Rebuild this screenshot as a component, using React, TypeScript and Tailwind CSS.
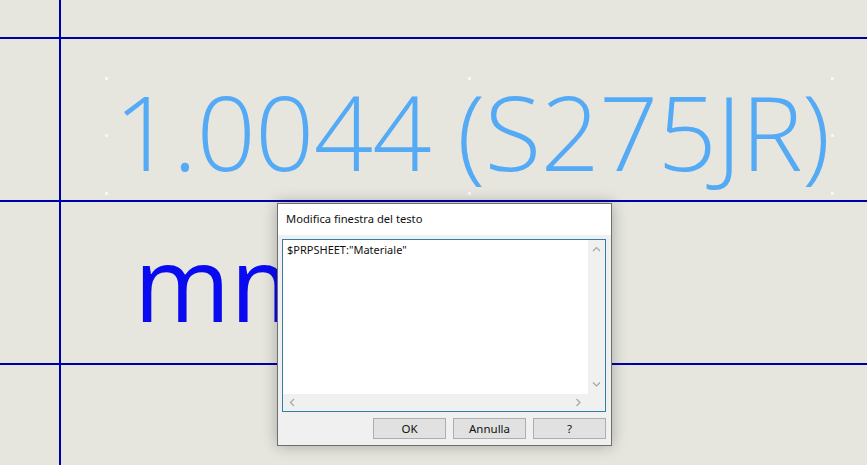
import React from "react";

const Chevron = ({ dir }: { dir: "up" | "down" | "left" | "right" }) => {
  const paths: Record<string, string> = {
    up: "M1 5 L4.5 1.5 L8 5",
    down: "M1 1.5 L4.5 5 L8 1.5",
    left: "M5 1 L1.5 4.5 L5 8",
    right: "M1.5 1 L5 4.5 L1.5 8",
  };
  const vertical = dir === "up" || dir === "down";
  return (
    <svg
      width={vertical ? 9 : 7}
      height={vertical ? 7 : 9}
      viewBox={vertical ? "0 0 9 7" : "0 0 7 9"}
      fill="none"
      stroke="#a6a6a6"
      strokeWidth="1.2"
    >
      <path d={paths[dir]} />
    </svg>
  );
};

const Handle = ({ className }: { className: string }) => (
  <span className={`absolute w-[3px] h-[3px] bg-[#f6f6f2] ${className}`} />
);

const DialogButton = ({ label }: { label: string }) => (
  <button className="w-[73px] h-[21px] bg-[#e1e1e1] border border-[#adadad] text-[11.5px] text-[#111] flex items-center justify-center leading-none">
    {label}
  </button>
);

export default function App() {
  return (
    <div
      className="relative w-[867px] h-[465px] overflow-hidden bg-[#0000aa]"
      style={{ fontFamily: "'Noto Sans', 'Liberation Sans', sans-serif" }}
    >
      {/* sheet table: the 2px gaps show the blue ruling */}
      <div className="grid grid-cols-[59px_1fr] grid-rows-[37px_161px_161px_100px] gap-[2px] w-full h-full">
        <div className="bg-[#e6e6df]" />
        <div className="bg-[#e6e6df]" />

        <div className="bg-[#e6e6df]" />
        <div className="bg-[#e6e6df] pt-[38px] pl-[44px]">
          <div className="relative w-[729px] h-[118px]">
            <Handle className="left-0 top-0" />
            <Handle className="left-0 top-[57px]" />
            <Handle className="left-0 bottom-0" />
            <Handle className="left-[363px] top-0" />
            <Handle className="left-[363px] bottom-0" />
            <Handle className="right-0 top-0" />
            <Handle className="right-0 top-[57px]" />
            <Handle className="right-0 bottom-0" />
            <div
              className="pl-[9px] pt-[2px] text-[104px] leading-none text-[#55aaf5] font-[350] whitespace-nowrap tracking-[-0.8px]"
              style={{ fontFamily: "'Open Sans', sans-serif" }}
            >
              1.0044 (S275JR)
            </div>
          </div>
        </div>

        <div className="bg-[#e6e6df]" />
        <div className="bg-[#e6e6df] pl-[73px] pt-[28px]">
          <div
            className="text-[104px] leading-none text-[#0a0af0] whitespace-nowrap"
            style={{ fontFamily: "'Open Sans', sans-serif" }}
          >
            mm
          </div>
        </div>

        <div className="bg-[#e6e6df]" />
        <div className="bg-[#e6e6df]" />
      </div>

      {/* text edit dialog */}
      <div className="absolute left-[277px] top-[203px] w-[335px] h-[243px] border border-[#6e6e6e] bg-[#f0f0f0] flex flex-col shadow-[0_0_14px_rgba(0,0,0,0.28)]">
        <div className="h-[31px] bg-white flex items-center pl-[8px] text-[11.2px] text-[#111]">
          Modifica finestra del testo
        </div>
        <div className="pt-[4px] pl-[4px] pr-[5px]">
          <div className="h-[173px] border border-[#2f7fa9] bg-white grid grid-cols-[1fr_17px] grid-rows-[1fr_17px]">
            <div className="pl-[4px] pt-[2px] text-[11px] text-[#111] leading-[16px]">
              $PRPSHEET:"Materiale"
            </div>
            <div className="bg-[#f0f0f0] flex flex-col items-center justify-between py-[6px]">
              <Chevron dir="up" />
              <Chevron dir="down" />
            </div>
            <div className="bg-[#f0f0f0] flex items-center justify-between px-[6px]">
              <Chevron dir="left" />
              <Chevron dir="right" />
            </div>
            <div className="bg-[#f0f0f0]" />
          </div>
        </div>
        <div className="mt-[6px] pr-[5px] flex justify-end gap-[7px]">
          <DialogButton label="OK" />
          <DialogButton label="Annulla" />
          <DialogButton label="?" />
        </div>
      </div>
    </div>
  );
}
